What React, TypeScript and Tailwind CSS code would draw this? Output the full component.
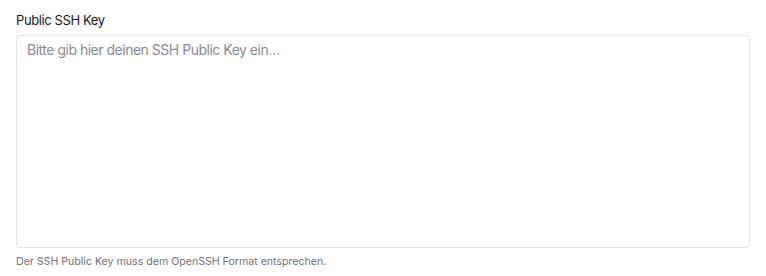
import React from 'react';

export default function App() {
  return (
    <div
      className="bg-white w-[766px] h-[276px] px-4 pt-[10px]"
      style={{ fontFamily: 'Inter, "Noto Sans", sans-serif' }}
    >
      <label htmlFor="ssh-key" className="block text-[13px] tracking-[-0.03em] leading-5 font-normal text-[#18181b] mb-[5px]">
        Public SSH Key
      </label>
      <textarea
        id="ssh-key"
        className="block w-[734px] h-[213px] resize-none rounded-[4px] border border-[#e4e4e7] bg-white px-[10px] pt-[4px] pb-2 text-sm tracking-[-0.035em] leading-5 text-[#18181b] placeholder:text-[#8a8a93] outline-none"
        placeholder="Bitte gib hier deinen SSH Public Key ein…"
      />
      <p className="mt-[6px] text-[10.6px] leading-4 text-[#71717a]">
        Der SSH Public Key muss dem OpenSSH Format entsprechen.
      </p>
    </div>
  );
}
